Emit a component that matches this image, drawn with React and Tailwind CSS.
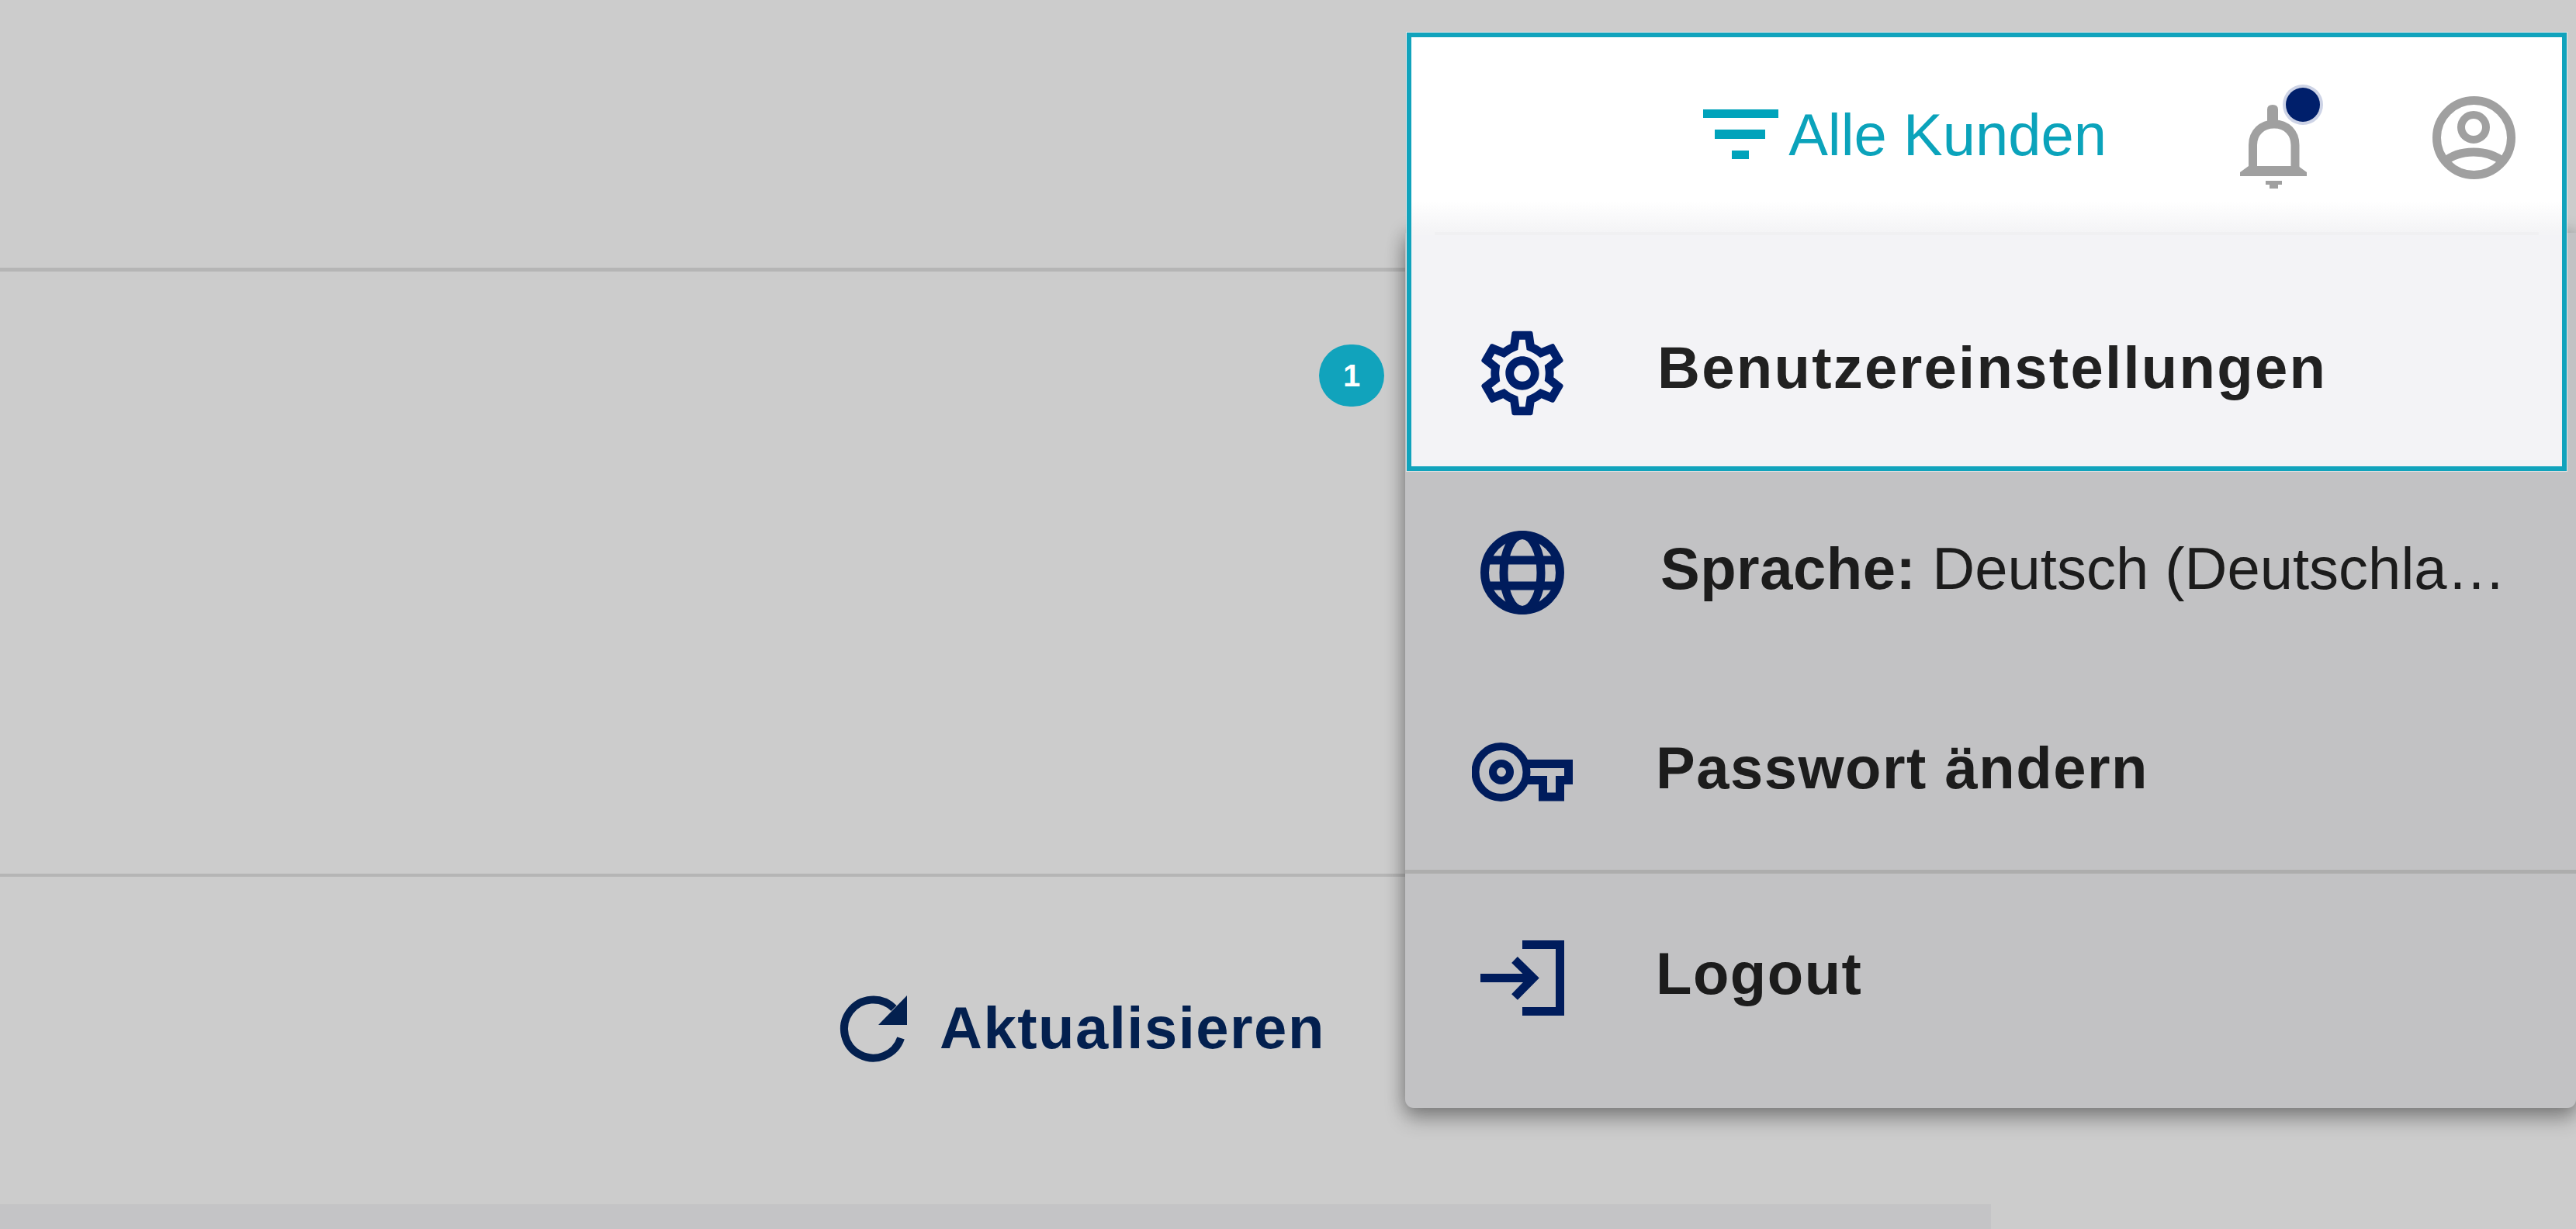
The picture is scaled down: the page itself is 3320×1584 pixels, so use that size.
import React from 'react';
import { MdOutlineSettings } from 'react-icons/md';

const navy = '#001c5c';

const FilterIcon = () => (
  <svg width="97" height="64" viewBox="0 0 97 64" className="mt-[-2px] shrink-0">
    <rect x="0" y="0" width="97" height="11" fill="#00a3bb" />
    <rect x="15" y="26" width="65" height="12" fill="#00a3bb" />
    <rect x="37" y="53" width="22" height="11" fill="#00a3bb" />
  </svg>
);

const BellIcon = () => (
  <svg width="107" height="134" viewBox="0 0 107 134" className="mt-[4px] shrink-0">
    <path d="M16.5 112 V78 C16.5 62 28 51 44 51 C60 51 71 62 71 78 V112" fill="none" stroke="#a0a0a0" strokeWidth="11" />
    <path d="M35 48 V32 Q35 26 42 26 Q49 26 49 32 V48 Z" fill="#a0a0a0" />
    <path d="M11 105 L0 113 V118 H86 V113 L75 105 Z" fill="#a0a0a0" />
    <path d="M33 124 H54 V129 H49 V134 H38 V129 H33 Z" fill="#a0a0a0" />
    <circle cx="81" cy="26" r="26" fill="#cdd3e6" />
    <circle cx="81" cy="26" r="22" fill="#001f6b" />
  </svg>
);

const UserIcon = () => (
  <svg width="109" height="109" viewBox="0 0 109 109" className="mt-[8px] shrink-0" fill="none" stroke="#a0a0a0" strokeWidth="11">
    <circle cx="54.5" cy="54.5" r="48" />
    <circle cx="54" cy="41" r="16" strokeWidth="10" />
    <path d="M16 86 C26 77 40 73 54 73 C68 73 82 77 93 86" />
  </svg>
);

const GlobeIcon = () => (
  <svg width="108" height="108" viewBox="0 0 108 108" className="shrink-0" fill="none" stroke={navy} strokeWidth="11">
    <circle cx="54" cy="54" r="48.5" />
    <ellipse cx="54" cy="54" rx="24" ry="48.5" />
    <path d="M6 38 H102 M6 71 H102" />
  </svg>
);

const KeyIcon = () => (
  <svg width="130" height="76" viewBox="1897 959 130 76" className="shrink-0" fill="none" stroke={navy}>
    <circle cx="1934.5" cy="997" r="33" strokeWidth="10" />
    <circle cx="1935" cy="997" r="11" strokeWidth="10" />
    <path d="M1962 986.5 H2021.5 V1007.5 H2010.5 V1029 H1988.5 V1007.5 H1962" strokeWidth="11" />
  </svg>
);

const LogoutIcon = () => (
  <svg width="108" height="97" viewBox="1908 1212 108 97" className="shrink-0" fill="none" stroke={navy} strokeWidth="11">
    <path d="M1962 1217.5 H2010.5 V1303.5 H1962" />
    <path d="M1908 1260.5 H1975" />
    <path d="M1952 1237 L1976 1260.5 L1952 1285" />
  </svg>
);

const RefreshIcon = () => (
  <svg width="85" height="86" viewBox="1084 1283 85 86" className="shrink-0 overflow-visible">
    <path d="M1161 1338 A37.5 37.5 0 1 1 1152 1299.5" fill="none" stroke="#03204f" strokeWidth="10" />
    <path d="M1169 1283 V1321 H1132 Z" fill="#03204f" />
  </svg>
);

const MenuRow = ({ height, icon, slot, children }) => (
  <div className={`flex items-center ${height}`}>
    <div className={`flex shrink-0 ${slot}`}>{icon}</div>
    {children}
  </div>
);

export default function App() {
  return (
    <div className="relative h-[1584px] w-full overflow-hidden bg-[#cccccc] font-['Liberation_Sans',Arial,sans-serif]">
      {/* dimmed page behind the overlay */}
      <div className="h-[350px] border-b-[5px] border-[#b5b5b5]" />
      <div className="h-[780px] border-b-[4px] border-[#b5b5b5]" />
      <div className="flex h-[422px] items-start pl-[1084px] pt-[153px]">
        <RefreshIcon />
        <span className="ml-[42px] mt-[4px] text-[76px] font-bold leading-[76px] tracking-[1.5px] text-[#03204f]">Aktualisieren</span>
      </div>
      <div className="h-[32px] w-[2566px] bg-[#c4c4c6]" />

      {/* user menu */}
      <div className="absolute left-[1811px] top-[300px] h-[1128px] w-[1509px] rounded-b-[11px] bg-[#c2c2c4] pt-[307px] text-[#1c1c1c] shadow-[0_14px_26px_0_rgba(0,0,0,0.3),0_0_22px_2px_rgba(0,0,0,0.2)]">
        <MenuRow height="h-[262px]" slot="ml-[97px] w-[232px]" icon={<GlobeIcon />}>
          <span className="mb-[10px] w-[1090px] truncate text-[76px] leading-[90px]">
            <b className="font-bold tracking-[0.5px]">Sprache:</b> Deutsch (Deutschland)
          </span>
        </MenuRow>
        <MenuRow height="h-[252px]" slot="ml-[86px] w-[237px]" icon={<KeyIcon />}>
          <span className="mb-[10px] text-[76px] font-bold leading-[90px] tracking-[1.5px]">Passwort ändern</span>
        </MenuRow>
        <div className="h-[5px] bg-[#adadad]" />
        <MenuRow height="h-[268px]" slot="ml-[97px] w-[226px]" icon={<LogoutIcon />}>
          <span className="mb-[10px] text-[76px] font-bold leading-[90px] tracking-[1.5px]">Logout</span>
        </MenuRow>
      </div>

      {/* highlighted tour step */}
      <div className="absolute left-[1813px] top-[42px] h-[565px] w-[1495px] border-[6px] border-[#11a3bc] bg-[#f4f4f6] shadow-[0_0_0_1px_rgba(255,255,255,0.5)]">
        <div className="flex h-[251px] items-center justify-end bg-linear-to-b from-white from-[84%] to-[#f4f4f6] pr-[59px]">
          <FilterIcon />
          <span className="ml-[13px] text-[76px] leading-[90px] text-[#0ba3bb]">Alle Kunden</span>
          <div className="ml-[172px]"><BellIcon /></div>
          <div className="ml-[140px]"><UserIcon /></div>
        </div>
        <div className="mx-[30px] h-[4px] bg-[#f0f0f2]" />
        <div className="flex h-[298px] items-center bg-[#f3f3f6] pt-[62px]">
          <MdOutlineSettings className="ml-[78px] mt-[-4px] h-[130px] w-[130px] shrink-0" color="#001f6b" />
          <span className="ml-[109px] mb-[18px] text-[76px] font-bold leading-[90px] tracking-[2.3px] text-[#212121]">Benutzereinstellungen</span>
        </div>
      </div>

      {/* step badge */}
      <div className="absolute left-[1700px] top-[444px] flex h-[80px] w-[84px] items-center justify-center rounded-full bg-[#11a3bc] text-[40px] font-bold leading-none text-white">1</div>
    </div>
  );
}
